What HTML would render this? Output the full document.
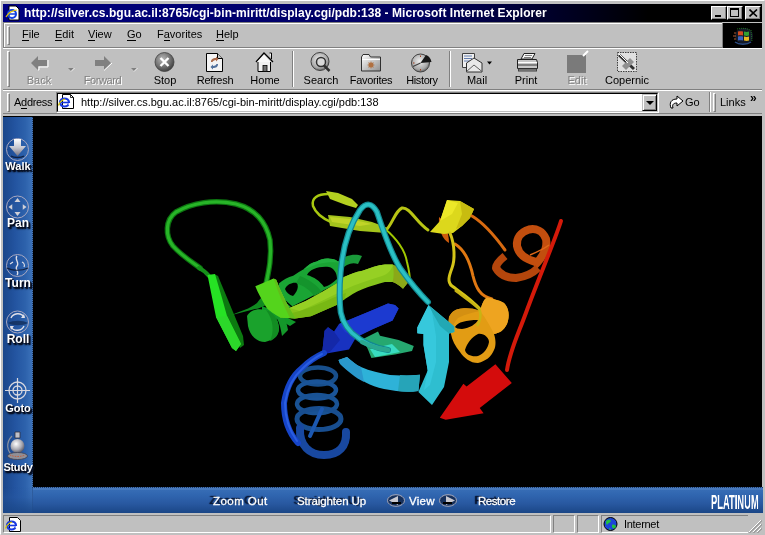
<!DOCTYPE html>
<html><head><meta charset="utf-8">
<style>
*{box-sizing:border-box}
html,body{margin:0;padding:0;width:765px;height:535px;overflow:hidden;background:#c0c0c0;font-family:"Liberation Sans",sans-serif;font-size:11px;color:#000}
.a{position:absolute;will-change:transform}
#title{left:3px;top:4px;width:759px;height:18px;background:linear-gradient(90deg,#000080 0%,#000060 55%,#000000 85%,#000 100%)}
#ttext{left:24px;top:3.5px;color:#fff;font-weight:bold;font-size:12px;letter-spacing:0.05px;white-space:nowrap;line-height:18px}
.tb{top:6px;width:16px;height:14px;background:#c0c0c0;border:1px solid;border-color:#fff #000 #000 #fff;box-shadow:inset -1px -1px #808080}
.hl{height:1px}
.menu{top:27px;line-height:14px}
.menu u{text-decoration:none;border-bottom:1px solid #000}
.grip{width:3px;border:1px solid;border-color:#fff #808080 #808080 #fff}
.lbl{top:74px;line-height:12px;text-align:center;white-space:nowrap}
.dis{color:#808080;text-shadow:1px 1px 0 #fff}
.sep{width:2px;border-left:1px solid #808080;border-right:1px solid #fff}
.panel{top:515px;height:18px;border:1px solid;border-color:#808080 #fff #fff #808080}
</style></head><body>
<!-- window frame highlights -->
<div class="a" style="left:0;top:0;width:765px;height:535px;border:1px solid;border-color:#fff #c0c0c0 #c0c0c0 #fff"></div>

<div id="title" class="a"></div>
<div id="ttext" class="a">http://silver.cs.bgu.ac.il:8765/cgi-bin-miritt/display.cgi/pdb:138 - Microsoft Internet Explorer</div>
<!-- title icon -->
<svg class="a" style="left:5px;top:5px" width="16" height="16" viewBox="0 0 16 16">
<path d="M4 1h7l3 3v11H4z" fill="#fff" stroke="#000" stroke-width="1"/>
<circle cx="7" cy="9" r="4" fill="none" stroke="#1040e0" stroke-width="2"/>
<path d="M4 9h6" stroke="#1040e0" stroke-width="1.5"/>
<path d="M1 12c2-5 8-7 11-7" fill="none" stroke="#e0c000" stroke-width="1.2"/>
</svg>
<div class="a tb" style="left:711px"><div class="a" style="left:3px;top:8px;width:6px;height:2px;background:#000"></div></div>
<div class="a tb" style="left:727px"><div class="a" style="left:2px;top:1px;width:9px;height:9px;border:1px solid #000;border-top-width:2px"></div></div>
<div class="a tb" style="left:745px"><svg class="a" style="left:3px;top:2px" width="9" height="8"><path d="M0.5 0.5L8 7.5M8 0.5L0.5 7.5" stroke="#000" stroke-width="1.6"/></svg></div>

<!-- menu bar -->
<div class="a" style="left:3px;top:22px;width:719px;height:1px;background:#808080"></div>
<div class="a" style="left:4px;top:23px;width:718px;height:1px;background:#fff"></div>
<div class="a" style="left:3px;top:22px;width:1px;height:26px;background:#808080"></div>
<div class="a" style="left:4px;top:23px;width:1px;height:24px;background:#fff"></div>
<div class="a" style="left:3px;top:47px;width:719px;height:1px;background:#808080"></div>
<div class="a grip" style="left:7px;top:26px;height:19px"></div>
<div class="a menu" style="left:22px"><u>F</u>ile</div>
<div class="a menu" style="left:55px"><u>E</u>dit</div>
<div class="a menu" style="left:88px"><u>V</u>iew</div>
<div class="a menu" style="left:127px"><u>G</u>o</div>
<div class="a menu" style="left:157px">F<u>a</u>vorites</div>
<div class="a menu" style="left:216px"><u>H</u>elp</div>
<div class="a" style="left:722px;top:23px;width:40px;height:25px;background:#000;border-left:1px solid #808080"></div>

<!-- toolbar -->
<div class="a" style="left:3px;top:48px;width:759px;height:1px;background:#fff"></div>
<div class="a" style="left:3px;top:89px;width:759px;height:1px;background:#808080"></div>
<div class="a" style="left:3px;top:90px;width:759px;height:1px;background:#fff"></div>
<div class="a grip" style="left:7px;top:51px;height:36px"></div>
<div class="a lbl dis" style="left:24px;width:30px">Back</div>
<div class="a lbl dis" style="left:81px;width:43px;letter-spacing:-0.4px">Forward</div>
<div class="a lbl" style="left:150px;width:30px">Stop</div>
<div class="a lbl" style="left:195px;width:40px;letter-spacing:-0.3px">Refresh</div>
<div class="a lbl" style="left:247px;width:36px">Home</div>
<div class="a sep" style="left:292px;top:51px;height:36px"></div>
<div class="a lbl" style="left:301px;width:40px">Search</div>
<div class="a lbl" style="left:346px;width:50px;letter-spacing:-0.3px">Favorites</div>
<div class="a lbl" style="left:401px;width:42px;letter-spacing:-0.4px">History</div>
<div class="a sep" style="left:449px;top:51px;height:36px"></div>
<div class="a lbl" style="left:462px;width:30px">Mail</div>
<div class="a lbl" style="left:511px;width:30px">Print</div>
<div class="a lbl dis" style="left:562px;width:30px">Edit</div>
<div class="a lbl" style="left:604px;width:46px">Copernic</div>

<!-- toolbar icons -->
<svg class="a" style="left:0;top:48px" width="765" height="28" viewBox="0 48 765 28">
<!-- back -->
<path d="M31 63 L38 56 L38 60 L47 60 L47 66 L38 66 L38 70 Z" fill="#808080"/>
<path d="M38 70 L39 70 L39 67 L48 67 L48 60" fill="none" stroke="#fff" stroke-width="1"/>
<path d="M68 68 h6 l-3 3z" fill="#808080"/><path d="M71 71.5 l3.5 -3.5" stroke="#fff" stroke-width="0.8"/>
<!-- forward -->
<path d="M111 63 L104 56 L104 60 L95 60 L95 66 L104 66 L104 70 Z" fill="#808080"/>
<path d="M104 70.5 L112 63" fill="none" stroke="#fff" stroke-width="1"/>
<path d="M131 68 h6 l-3 3z" fill="#808080"/><path d="M134 71.5 l3.5 -3.5" stroke="#fff" stroke-width="0.8"/>
<!-- stop -->
<defs>
<radialGradient id="gs" cx="0.4" cy="0.35" r="0.7"><stop offset="0" stop-color="#b8b8b8"/><stop offset="0.6" stop-color="#707070"/><stop offset="1" stop-color="#3a3a3a"/></radialGradient>
<radialGradient id="gsearch" cx="0.45" cy="0.4" r="0.65"><stop offset="0" stop-color="#f0f0f0"/><stop offset="0.7" stop-color="#a8a8a8"/><stop offset="1" stop-color="#505050"/></radialGradient>
<linearGradient id="gfold" x1="0" y1="0" x2="1" y2="1"><stop offset="0" stop-color="#fff"/><stop offset="1" stop-color="#909090"/></linearGradient>
</defs>
<circle cx="164.5" cy="62" r="9.5" fill="url(#gs)" stroke="#404040" stroke-width="0.8"/>
<path d="M160.5 58 L168.5 66 M168.5 58 L160.5 66" stroke="#fff" stroke-width="2.4"/>
<!-- refresh -->
<path d="M206.5 53.5 h11 l5 5 v13 h-16z" fill="#f4f4f4" stroke="#000" stroke-width="1"/>
<path d="M217.5 53.5 v5 h5" fill="#c0c0c0" stroke="#000" stroke-width="1"/>
<path d="M211 62 c0-3 2-4 5-4 l0-1.5 l2.5 2.5 l-2.5 2.5 l0-1.5 c-2 0-3 1-3.5 2z" fill="#a86848"/>
<path d="M218 64 c0 3-2 4-5 4 l0 1.5 l-2.5-2.5 l2.5-2.5 l0 1.5 c2 0 3-1 3.5-2z" fill="#50709c"/>
<!-- home -->
<path d="M256 62 L264 53 L273 62" fill="none" stroke="#000" stroke-width="1.3"/>
<path d="M257 62 L264 54.5 L271 62 Z" fill="#f8f8f8"/>
<path d="M269.5 53 h2 v6" fill="#fff" stroke="#000" stroke-width="1"/>
<path d="M258 62 v9.5 h12.5 v-9.5" fill="#f0f0f0" stroke="#000" stroke-width="1"/>
<rect x="263" y="65.5" width="4" height="6" fill="#707070" stroke="#000" stroke-width="0.8"/>
<!-- search -->
<circle cx="320" cy="61.5" r="9" fill="url(#gsearch)" stroke="#404040" stroke-width="1"/>
<circle cx="321" cy="62" r="4.5" fill="#d8d8d8" stroke="#303030" stroke-width="1.5"/>
<path d="M324 65.5 L329.5 71" stroke="#303030" stroke-width="2.5"/>
<!-- favorites -->
<path d="M361.5 57 l1.5 -2.5 h6 l1.5 2.5 h10 v14 h-19z" fill="url(#gfold)" stroke="#303030" stroke-width="1"/>
<path d="M362 59.5 h18" stroke="#fff" stroke-width="1"/>
<path d="M371 61 l0.8 2 2 -0.8 -0.8 2 2 0.8 -2 0.8 0.8 2 -2 -0.8 -0.8 2 -0.8 -2 -2 0.8 0.8 -2 -2 -0.8 2 -0.8 -0.8 -2 2 0.8z" fill="#b07040"/>
<!-- history -->
<circle cx="420.5" cy="63" r="9" fill="url(#gsearch)" stroke="#404040" stroke-width="1"/>
<path d="M420.5 63 L426 55 C429 56 431 59 431.5 62 Z" fill="#181818"/>
<path d="M420.5 63 L413 66.5" stroke="#404040" stroke-width="1.2"/>
<path d="M420.5 55.5 v1.5 M413 63 h1.5 M420.5 69 v1.5" stroke="#a04020" stroke-width="1"/>
<!-- mail -->
<path d="M462.5 53.5 h12 v14 h-12z" fill="#f0f0f0" stroke="#404040" stroke-width="1"/>
<path d="M464 56h8 M464 58.5h8 M464 61h6" stroke="#4060a0" stroke-width="0.8"/>
<path d="M466.5 63 L474 58 L482 63 v9 h-15.5z" fill="#e8e8e8" stroke="#303030" stroke-width="1"/>
<path d="M466.5 71.5 L474 65 L482 71.5" fill="none" stroke="#606060" stroke-width="1"/>
<path d="M487 61.5 h5 l-2.5 3z" fill="#000"/>
<!-- print -->
<path d="M521 59 L524 53.5 h11 l-3 5.5z" fill="#f8f8f8" stroke="#202020" stroke-width="1"/>
<path d="M525 55.5 h7 M524 57.5 h7" stroke="#606060" stroke-width="0.8"/>
<path d="M517.5 59.5 h19 l1 3 v6 h-20z" fill="#c8c8c8" stroke="#202020" stroke-width="1"/>
<path d="M518 62.5 h19" stroke="#fff" stroke-width="1"/>
<path d="M518 65 h19" stroke="#505050" stroke-width="1.2"/>
<path d="M518 68.5 h19 v3 h-19z" fill="#404040"/>
<path d="M519 70 h17" stroke="#a0a0a0" stroke-width="1"/>
<!-- edit (disabled) -->
<rect x="567" y="55" width="19" height="18" fill="#7a7a7a"/>
<path d="M583 56 L588 51" stroke="#fff" stroke-width="2"/>
<!-- copernic -->
<rect x="617.5" y="52.5" width="19" height="19" fill="#e0e0e0" stroke="#404040" stroke-width="1" stroke-dasharray="1.5 1"/>
<path d="M619 55 L634 69" stroke="#303030" stroke-width="3"/>
<path d="M622 66 L630 58 L634 62 L626 70 Z" fill="#909090"/>
<path d="M619 54 L628 63" stroke="#fff" stroke-width="1"/>
</svg>

<!-- address bar -->
<div class="a" style="left:3px;top:113px;width:759px;height:1px;background:#808080"></div>
<div class="a grip" style="left:7px;top:93px;height:19px"></div>
<div class="a" style="left:14px;top:96px;line-height:12px;letter-spacing:-0.3px">A<u style="text-decoration:none;border-bottom:1px solid #000">d</u>dress</div>
<div class="a" style="left:56px;top:92px;width:603px;height:21px;background:#fff;border:1px solid;border-color:#808080 #fff #fff #808080"><div class="a" style="left:0;top:0;right:0;bottom:0;border:1px solid;border-color:#000 #c0c0c0 #c0c0c0 #000"></div></div>
<div class="a" style="left:81px;top:96px;line-height:12px;white-space:nowrap">http://silver.cs.bgu.ac.il:8765/cgi-bin-miritt/display.cgi/pdb:138</div>
<div class="a" style="left:642px;top:94px;width:15px;height:17px;background:#c0c0c0;border:1px solid;border-color:#c0c0c0 #000 #000 #c0c0c0;box-shadow:inset 1px 1px #fff,inset -1px -1px #808080"><div class="a" style="left:3px;top:6px;width:0;height:0;border-left:4px solid transparent;border-right:4px solid transparent;border-top:4px solid #000"></div></div>
<div class="a" style="left:685px;top:96px;line-height:12px">Go</div>
<div class="a sep" style="left:709px;top:92px;height:20px"></div>
<div class="a grip" style="left:713px;top:93px;height:19px"></div>
<div class="a" style="left:720px;top:96px;line-height:12px">Links</div>

<!-- content -->
<div class="a" id="content" style="left:3px;top:116px;width:759px;height:397px;background:#000;border-top:1px solid #000"></div>

<!-- sidebar -->
<div class="a" style="left:3px;top:117px;width:30px;height:396px;background:linear-gradient(90deg,#1a468a 0%,#2354a0 40%,#2d62ac 75%,#3a70b8 95%,#2a5490 100%)"></div>
<div class="a" style="left:33px;top:487px;width:730px;height:26px;background:linear-gradient(180deg,#3a70b8 0%,#3066b0 30%,#2858a0 65%,#1a4686 100%)"></div>
<div class="a" style="left:3px;top:487px;width:30px;height:26px;background:linear-gradient(180deg,rgba(58,112,184,0.0) 0%,rgba(40,88,160,0.35) 40%,rgba(26,70,134,0.9) 100%)"></div>
<div class="a" style="left:32px;top:117px;width:1px;height:371px;background:repeating-linear-gradient(180deg,#1a3a6a 0 1px,#4a78b8 1px 2px)"></div>
<div class="a" style="left:32px;top:487px;width:731px;height:1px;background:repeating-linear-gradient(90deg,#1a3a6a 0 1px,#4a78b8 1px 2px)"></div>
<div class="a" style="left:33px;top:488px;width:730px;height:2px;background:rgba(120,160,220,0.25)"></div>
<svg class="a" style="left:3px;top:117px" width="760" height="396" viewBox="3 117 760 396">
<defs>
<linearGradient id="ga" x1="0" y1="0" x2="0" y2="1"><stop offset="0" stop-color="#ffffff"/><stop offset="0.5" stop-color="#c8c8d0"/><stop offset="1" stop-color="#707080"/></linearGradient>
<radialGradient id="gball" cx="0.4" cy="0.35" r="0.7"><stop offset="0" stop-color="#fff"/><stop offset="0.6" stop-color="#a8a8b0"/><stop offset="1" stop-color="#505060"/></radialGradient>
</defs>
<g fill="none" stroke="#a8a8c0" stroke-width="1">
<circle cx="17.5" cy="149.5" r="11"/>
<circle cx="17.5" cy="207" r="11"/>
<circle cx="17.5" cy="265.5" r="11"/>
<circle cx="17.5" cy="322" r="11"/>
</g>
<!-- walk arrow -->
<path d="M14 139 h7 v7 h5 l-8.5 10 l-8.5 -10 h5z" fill="url(#ga)"/>
<path d="M11 156 c3 2 10 2 13 0" stroke="#102040" stroke-width="1.5" fill="none"/>
<!-- pan arrows -->
<g fill="#d0d0d8">
<path d="M17.5 198 l3 4 h-6z"/><path d="M17.5 216 l3 -4 h-6z"/><path d="M8.5 207 l4 -3 v6z"/><path d="M26.5 207 l-4 -3 v6z"/>
</g>
<path d="M12 204 h11 v6 h-11z" fill="#2a5aa0" opacity="0.5"/>
<!-- turn -->
<path d="M17 256 c-3 3 3 7 0 10 c-3 3 3 6 0 9" stroke="#e0e0e8" stroke-width="1.3" fill="none"/>
<path d="M10 264 l3 -2 M22 262 c2 1 3 3 2 5" stroke="#e0e0e8" stroke-width="1.2" fill="none"/>
<path d="M7 268 c5 3 15 3 21 0" stroke="#102040" stroke-width="1.2" fill="none"/>
<!-- roll -->
<path d="M11 318 c2 -5 10 -6 13 -1" stroke="#e0e0e8" stroke-width="1.4" fill="none"/>
<path d="M24 326 c-2 5 -10 6 -13 1" stroke="#e0e0e8" stroke-width="1.4" fill="none"/>
<path d="M24 314 l1 4 l-4 0z M11 330 l-1 -4 l4 0z" fill="#e0e0e8"/>
<path d="M8 323 c5 -3 15 -3 20 0 c-5 3 -15 3 -20 0z" fill="#102850" opacity="0.7"/>
<!-- goto crosshair -->
<g fill="none" stroke="#d8d8e0">
<circle cx="17.5" cy="390.5" r="8.5" stroke-width="1.3"/>
<circle cx="17.5" cy="390.5" r="4.5" stroke-width="1.3"/>
<path d="M17.5 378 v25 M5 390.5 h25" stroke-width="1.2"/>
</g>
<!-- study -->
<path d="M15 432 h5 v6 h-5z" fill="#c0c0c8" stroke="#303040" stroke-width="0.8"/>
<path d="M12 436 c-6 6 -6 16 2 20" stroke="#8890a0" stroke-width="1.2" fill="none"/>
<circle cx="17.5" cy="446" r="7" fill="url(#gball)"/>
<ellipse cx="17.5" cy="456" rx="10" ry="3.5" fill="#909098" stroke="#404050" stroke-width="0.8"/>
<path d="M10 455 c4 2 11 2 15 0" stroke="#c06040" stroke-width="1" fill="none" stroke-dasharray="1.5 1"/>
<!-- bottom nav ellipses -->
<ellipse cx="396" cy="500.5" rx="8.5" ry="5.8" fill="#16305c" stroke="#a8a8b8" stroke-width="1"/>
<path d="M389 500.5 l9 -4.5 v9z" fill="#c8c8d0"/>
<path d="M392 503 h9" stroke="#000" stroke-width="2"/>
<ellipse cx="448" cy="500.5" rx="8.5" ry="5.8" fill="#16305c" stroke="#a8a8b8" stroke-width="1"/>
<path d="M455 500.5 l-9 -4.5 v9z" fill="#c8c8d0"/>
<path d="M443 503 h9" stroke="#000" stroke-width="2"/>
</svg>
<style>
.sl{color:#fff;font-weight:bold;font-size:11px;line-height:12px;text-shadow:1px 1px 0 #050c20,2px 2px 1px #050c20,1px 2px 2px #000;white-space:nowrap;text-align:center;width:30px;left:3px}
.bl{color:#fff;font-size:11.5px;-webkit-text-stroke:0.3px #fff;line-height:14px;white-space:nowrap;text-shadow:-3px -1px 1px #06122c,-4px -1px 1px #06122c}
</style>
<div class="a sl" style="top:160px">Walk</div>
<div class="a sl" style="top:217px;font-size:12px">Pan</div>
<div class="a sl" style="top:277px;font-size:12px">Turn</div>
<div class="a sl" style="top:333px;font-size:12px">Roll</div>
<div class="a sl" style="top:402px;font-size:11px">Goto</div>
<div class="a sl" style="top:461px;font-size:11px;letter-spacing:-0.3px">Study</div>
<div class="a bl" style="left:213px;top:494px;letter-spacing:0.45px">Zoom Out</div>
<div class="a bl" style="left:297px;top:494px;letter-spacing:-0.1px">Straighten Up</div>
<div class="a bl" style="left:409px;top:494px;text-shadow:none;letter-spacing:0.3px">View</div>
<div class="a bl" style="left:478px;top:494px;letter-spacing:-0.45px">Restore</div>
<div class="a" style="left:711px;top:492px;color:#fff;font-weight:bold;font-size:20px;line-height:20px;transform:scaleX(0.468);transform-origin:0 0;letter-spacing:0px;white-space:nowrap">PLATINUM</div>

<svg class="a" style="left:0;top:0" width="765" height="535" viewBox="0 0 765 535">
<g fill="none" stroke-linecap="round" stroke-linejoin="round">
<!-- green loop tube -->
<path d="M200 268 C192 262 182 256 173 246 C165 236 165 220 176 212 C192 203 214 199 236 204 C255 209 266 222 270 240 C272 256 269 270 266 284" stroke="#0c7410" stroke-width="5.5"/>
<path d="M200 268 C192 262 182 256 173 246 C165 236 165 220 176 212 C192 203 214 199 236 204 C255 209 266 222 270 240 C272 256 269 270 266 284" stroke="#28b428" stroke-width="3.2"/>
<path d="M199 268 C203 270 206 272 209 276" stroke="#16901a" stroke-width="4"/>
</g>
<!-- bright green strand -->
<polygon points="214,274 218,276 228,300 243,336 244,345 240,348 226,316" fill="#0c7a10"/>
<polygon points="207.5,275 215,274 222,298 227,316 241,344 236,351 232,348 216,317" fill="#26e224"/>
<polygon points="216,317 227,316 241,344 236,351 232,348" fill="#2cd82a"/>
<!-- green helix rings (behind band) -->
<path d="M337 262 C345 255 355 253 362 256 L358 264 C352 262 346 264 341 270 Z" fill="#1a9a3a"/>
<path d="M278.8 283.6 C283 280 288 277 293.2 275.8 C297 273 300 271 303.7 269.2 C308 265 312 262 316.7 261.4 C321 259 326 258 329.8 258.8 C334 259 337 260 339 262.7 C341 267 341 272 341 277 L336 284 L289 308 C285 304 282 300 280 297 Z" fill="#1aa434"/>
<path d="M303.7 269.2 C308 265 312 262 316.7 261.4 C321 259 326 258 329.8 258.8 C334 259 337 260 339 262.7 C334 262 326 262 318 264 C312 266 308 268 303.7 269.2Z" fill="#22b040"/>
<path d="M285 289 C287 284 293 282 297 283 C299 287 297 292 293 296 C289 295 286 292 285 289Z" fill="#000"/>
<path d="M307 275 C310 269 319 266 329 267 C334 268 337 273 337 279 C333 283 328 286 324 287 C320 281 314 277 307 275Z" fill="#000"/>
<path d="M300 276 C308 279 316 284 322 292 L314 296 C310 290 304 286 296 283Z" fill="#14942c"/>
<path d="M284 300 L292 307" stroke="#000" stroke-width="1.5"/>
<path d="M262 306 C272 310 284 316 296 322 L290 326 C280 320 270 316 262 312Z" fill="#10982a"/>
<!-- green helix front face -->
<path d="M232 315 C240 311 250 309 257 303 C259 300 261 298 262 297 L266 305 C262 307 258 309 255 309 Z" fill="#108a20"/>
<path d="M247 316 C250 311 256 308 266 310 C273 312 278 318 279 328 C279 335 274 340 265 342 C257 342 250 336 248 326 Z" fill="#1aa22c"/>
<path d="M266 310 C273 312 278 318 279 328 C279 335 275 339 270 341 C274 333 274 320 266 310Z" fill="#128c22"/>
<path d="M270 302 C280 307 286 318 288 330 L282 336 C280 322 276 312 266 306 Z" fill="#14982a"/>
<!-- yellow-green broad band -->
<path d="M276.2 279.7 C280 290 285 300 289.3 308 L305.7 300.9 L321.2 292.6 L336.6 283.4 C339 281 341 279 344.5 276.8 C350 274 356 272 362.4 270.7 C370 268 378 265 384.9 264.5 L392.7 264.5 C396 266 398 268 400.4 271.8 C404 275 406 279 408.2 282.3 L403 288.8 C399 285 396 283 392.7 281.9 L384.9 281.9 C378 284 370 286 362.4 289.2 C355 292 350 296 344.5 299.3 L336.6 305 L326.3 309.6 L310.9 316.3 L295.4 318.4 L280.1 317.6 Z" fill="#86c41c"/>
<path d="M289.3 308 L305.7 300.9 L321.2 292.6 L336.6 283.4 C339 281 341 279 344.5 276.8 C350 274 356 272 362.4 270.7 C370 268 378 265 384.9 264.5 L392.7 264.5 C392 270 388 274 382 276 C370 280 356 284 344 290 C330 297 316 304 300 311 Z" fill="#96d024"/>
<path d="M392.7 264.5 C396 266 398 268 400.4 271.8 C404 275 406 279 408.2 282.3 L403 288.8 C399 285 396 283 392.7 281.9 C394 276 394 270 392.7 264.5Z" fill="#8aa818"/>
<path d="M344.5 299.3 L336.6 305 L326.3 309.6 L310.9 316.3 L295.4 318.4 L292 313 C305 310 320 304 335 297 C340 295 343 294 346 293Z" fill="#78b814"/>
<path d="M255.3 286.2 L273.6 278.4 L276.2 279.7 C280 290 285 300 289.3 308 L295.4 318.4 L280.1 317.6 C274 314 270 311 267 308.4 C262 300 258 293 255.3 286.2 Z" fill="#54d41c"/>
<path d="M273.6 278.4 L276.2 279.7 C280 290 285 300 289.3 308 L295.4 318.4 L290 318 C284 306 278 292 273.6 278.4Z" fill="#62bc1a"/>
<!-- top yellow-green hairpin -->
<g fill="none" stroke-linecap="round" stroke-linejoin="round">
<path d="M328 194 C318 194 311 198 313 206 C316 214 324 219 331 222" stroke="#a8c810" stroke-width="2.5"/>
<path d="M386 230 C392 225 395 211 402 208 C410 207 416 222 428 230" stroke="#b8c414" stroke-width="3"/>
<path d="M384 228 C396 238 405 250 407 262 C409 270 410 276 410 282" stroke="#a0c800" stroke-width="2"/>
</g>
<polygon points="326,191 338,193 352,199 358,205 356,208 346,205 330,199" fill="#b4d020"/>
<polygon points="328,215 350,217 372,222 388,228 386,233 360,231 330,226" fill="#a4c41c"/>
<polygon points="330,217 350,219 372,224 360,226 332,222" fill="#c0d428"/>
<!-- blue arrow -->
<polygon points="339,324 368,312 388,303.5 395,305 398.6,308.6 392.6,320.5 373,329 356,337.5 349,349.5 330.6,352.8 322,354.5 324.6,330.7 328,327.3 334,331.5" fill="#1832c0"/>
<polygon points="339,324 368,312 388,303.5 395,305 398.6,308.6 392.6,320.5 373,329 356,337 345,332" fill="#1c3ad0"/>
<polygon points="322,354.5 324.6,330.7 328,327.3 334,331.5 340,340 330,352" fill="#1428a8"/>
<!-- teal strand -->
<polygon points="363,339 378,331.5 380,335.8 398.6,340 413.8,346 412,351 395,354.5 371.4,357.9 368,349.4" fill="#26a870"/>
<polygon points="370,349 392,344 400,352 375,357" fill="#38dcc0"/>
<!-- cyan tube big loop -->
<g fill="none" stroke-linecap="round" stroke-linejoin="round">
<path d="M388 350 C375 348 362 342 352 333 C345 326 340 316 340 305 C339 290 340 275 342 260 C345 240 352 222 360 210 C366 202 372 203 377 212 C383 230 390 252 400 268 C410 282 418 292 428 302" stroke="#138890" stroke-width="6"/>
<path d="M388 350 C375 348 362 342 352 333 C345 326 340 316 340 305 C339 290 340 275 342 260 C345 240 352 222 360 210 C366 202 372 203 377 212 C383 230 390 252 400 268 C410 282 418 292 428 302" stroke="#2ac0c4" stroke-width="3.6"/>
</g>
<!-- blue helix rings -->
<g fill="none" stroke-linecap="round">
<ellipse cx="318" cy="376" rx="18" ry="8.5" stroke="#184f8c" stroke-width="4.5"/>
<ellipse cx="317" cy="390" rx="19" ry="8.5" stroke="#1a5498" stroke-width="4.5"/>
<ellipse cx="317" cy="404" rx="20" ry="9" stroke="#195294" stroke-width="4.5"/>
<ellipse cx="319" cy="419" rx="22" ry="10.5" stroke="#184e90" stroke-width="5"/>
<path d="M300 428 C299 446 310 455 324 455 C339 455 347 446 346 432" stroke="#1848a0" stroke-width="8"/>
<path d="M322 409 L310 436" stroke="#1c58b0" stroke-width="4"/>
</g>
<path d="M362 342 C370 346 378 349 388 350" fill="none" stroke="#2aa890" stroke-width="4.5" stroke-linecap="round"/>
<!-- blue tube -->
<path d="M324 353 C315 357 308 362 302 368 C292 376 286 390 284 403 C284 418 288 432 298 443" fill="none" stroke="#1644c8" stroke-width="6" stroke-linecap="round"/>
<path d="M322 354 C314 358 308 363 302 369 C293 377 287 390 285 403 C285 418 289 430 297 441" fill="none" stroke="#2a5ee0" stroke-width="2" stroke-linecap="round"/>
<!-- cyan lower band -->
<path d="M338.5 360 L347 357 C352 361 356 365 361 367 C370 371 380 373 390 375 C402 376 412 375 420 374.7 L418.4 391 C406 393 396 391 384 389 C370 386 360 380 352 373 C346 369 342 366 340 363.7 Z" fill="#2eb2d8"/>
<path d="M338.5 360 L347 357 C352 361 356 365 361 367 L364 382 C356 378 346 370 340 363.7Z" fill="#2a98cc"/>
<path d="M400 375 C408 376 414 375 420 374.7 L418.4 391 C410 392 404 392 398 391Z" fill="#26a4b8"/>
<!-- yellow helix + orange behind -->
<path d="M439 217 C444 220 449 232 449 243 C443 240 438 230 439 217 Z" fill="#d05c0c"/>
<polygon points="447,200 460,201 474,209 470,218 462,226 453,233 444,234 430,232 440,221" fill="#dcd81c"/>
<polygon points="460,201 474,209 470,218 462,226 456,229 462,214" fill="#c8bc10"/>
<polygon points="447,200 458,203 452,214 440,221" fill="#ece828"/>
<g fill="none" stroke-linecap="round" stroke-linejoin="round">
<!-- orange tubes -->
<path d="M472 216 C482 222 492 232 505 250" stroke="#d86a10" stroke-width="3"/>
<path d="M455 244 C465 250 470 262 473 276 C476 288 480 296 492 299" stroke="#e07812" stroke-width="3"/>
<!-- yellow tube -->
<path d="M450 233 C455 245 455 260 452 268 C449 276 447 282 452 286 C460 292 470 298 481 310" stroke="#d4c418" stroke-width="3"/>
</g>
<!-- dark orange helix -->
<g fill="none" stroke-linejoin="round">
<path d="M534 266 C542 258 548 248 546 239 C543 231 536 228 529 229.5 C521 232 516 238 517 246 C519 256 528 260 536 262" stroke="#c24e0e" stroke-width="8"/>
<path d="M505 256 C500 260 496 264 496 268 C500 275 508 278 516 278 C524 277 532 274 538 268" stroke="#b4460c" stroke-width="8"/>
<path d="M530 255 C537 252 544 249 549 245" stroke="#e06818" stroke-width="1.5"/>
</g>
<!-- red tube -->
<path d="M561 221 C555 240 540 275 527 310 C518 335 510 350 507 370" fill="none" stroke="#d41a0a" stroke-width="4" stroke-linecap="round"/>
<!-- orange helix -->
<path d="M449 317 C452 311 456 309 462 308.5 C468 308 474 308.5 480 311 C482 304 484 299 487 297.5 C493 299 499 300 504 303 C509 308 510 316 507 324 C504 330 500 333 494 334 C496 340 496 346 494 350 C491 357 486 361 478 363 C470 363 464 358 460 352 C455 346 452 340 451 334 C449 328 448 322 449 317 Z M455 327 C458 322 466 320 478 320 C476 324 470 328 462 329 C458 329 456 328 455 327 Z M465 350 C467 343 472 337 478 334 C484 333 489 338 489 342 C488 348 484 354 478 356 C472 357 466 355 465 350 Z" fill="#e29c14" fill-rule="evenodd"/>
<path d="M480 311 C482 304 484 299 487 297.5 C493 299 499 300 504 303 C509 308 510 316 507 324 C504 330 500 333 494 334 C490 326 486 318 480 311Z" fill="#eea420"/>
<path d="M449 317 C452 311 456 309 462 308.5 C468 308 474 308.5 480 311 C474 312 466 314 458 318 C454 322 452 328 451 334 C449 328 448 322 449 317Z" fill="#d49012"/>
<path d="M455 290 C462 296 472 302 479 309 C482 314 480 322 477 326" stroke="#c8b414" stroke-width="2.5" fill="none"/>
<!-- cyan arrow -->
<polygon points="428.5,305 454.3,326.5 454.3,332 449,333.5 449,362 444,387 432,405 418.4,392 427.7,370.5 423.5,345 423.5,334 417.3,333.2 417.3,327.6" fill="#2ebed0"/>
<polygon points="428.5,305 454.3,326.5 454.3,332 449,333.5 440,326 432,312" fill="#22a8b4"/>
<polygon points="428.5,305 432,312 436,336 436,362 430,385 424,390 427.7,370.5 423.5,345 423.5,334 417.3,333.2 417.3,327.6" fill="#36c8dc"/>
<!-- red arrow -->
<polygon points="495.4,364.2 511.8,383.1 479.7,408 483.6,413.2 445.7,419.8 439.8,417.8 463.4,383.8 466.6,386.4" fill="#d40c0c"/>
</svg>

<!-- status bar -->
<div class="a panel" style="left:3px;width:548px"></div>
<div class="a panel" style="left:553px;width:22px"></div>
<div class="a panel" style="left:577px;width:22px"></div>
<div class="a panel" style="left:601px;width:147px;border-right:none"></div>
<div class="a" style="left:624px;top:518px;line-height:12px;letter-spacing:-0.3px">Internet</div>
<!-- IE icon address -->
<svg class="a" style="left:57px;top:93px" width="18" height="18" viewBox="0 0 18 18">
<path d="M5.5 1.5 h8 l3 3 v11 h-11z" fill="#fff" stroke="#000" stroke-width="1"/>
<path d="M13.5 1.5 v3 h3" fill="none" stroke="#000" stroke-width="0.8"/>
<ellipse cx="7.5" cy="9.5" rx="4.5" ry="4" fill="none" stroke="#1838e0" stroke-width="2.2"/>
<path d="M3.5 9.5 h8" stroke="#1838e0" stroke-width="1.6"/>
<path d="M11.5 11 h1.5" stroke="#fff" stroke-width="2"/>
<path d="M1.5 12.5 C2.5 9 5 7 8 6" fill="none" stroke="#d8c800" stroke-width="1.3"/>
</svg>
<!-- IE icon status -->
<svg class="a" style="left:3.5px;top:515.5px" width="18" height="18" viewBox="0 0 18 18">
<path d="M5.5 1.5 h8 l3 3 v11 h-11z" fill="#fff" stroke="#000" stroke-width="1"/>
<ellipse cx="7.5" cy="9.5" rx="4.5" ry="4" fill="none" stroke="#1838e0" stroke-width="2.2"/>
<path d="M3.5 9.5 h8" stroke="#1838e0" stroke-width="1.6"/>
<path d="M11.5 11 h1.5" stroke="#fff" stroke-width="2"/>
<path d="M1.5 12.5 C2.5 9 5 7 8 6" fill="none" stroke="#d8c800" stroke-width="1.3"/>
</svg>
<!-- Go icon -->
<svg class="a" style="left:668px;top:93px" width="18" height="18" viewBox="0 0 18 18">
<path d="M3 15 C1 10 3 6 9 6 L9 3 L15 8 L9 13 L9 10 C5 10 4 12 5 15 Z" fill="#fff" stroke="#000" stroke-width="1"/>
</svg>
<div class="a" style="left:750px;top:92px;font-size:12px;font-weight:bold;line-height:12px;letter-spacing:-1px">&#187;</div>
<!-- windows logo -->
<svg class="a" style="left:723px;top:24px" width="38" height="23" viewBox="0 0 38 23">
<rect width="38" height="23" fill="#000"/>
<ellipse cx="21" cy="12" rx="9" ry="8" fill="#141a28"/>
<path d="M15 7.5 C16.5 7 18 7 20 7.5 v4 c-2-0.5-3.5-0.5-5 0z" fill="#d04a20"/>
<path d="M21 7.5 c2 0.5 3.5 0.5 5 0 v4 c-1.5 0.5-3 0.5-5 0z" fill="#30a030"/>
<path d="M15 12.5 c1.5-0.5 3-0.5 5 0 v4 c-2-0.5-3.5-0.5-5 0z" fill="#3a62c0"/>
<path d="M21 12.5 c2 0.5 3.5 0.5 5 0 v4 c-1.5 0.5-3 0.5-5 0z" fill="#e8b820"/>
<path d="M11 9 h2 M10 12 h3 M11 15 h2" stroke="#b05a30" stroke-width="1.2"/>
<path d="M14 5 c4 -1 9 -1 13 1 M28 6 l1 12" stroke="#207020" stroke-width="1" fill="none" stroke-dasharray="1 1"/>
<path d="M12 18 c4 3 12 3 16 0" stroke="#2a4a80" stroke-width="1.5" fill="none"/>
</svg>
<!-- globe -->
<svg class="a" style="left:603px;top:516px" width="16" height="16" viewBox="0 0 16 16">
<circle cx="7.5" cy="8" r="6.5" fill="#1c44d8" stroke="#000" stroke-width="1"/>
<path d="M3 5 c2-2 4-2 5 0 c-1 2-3 2-4 4 c-1-1-1-2-1-4z M9 9 c2-1 4 0 4 2 c-2 2-3 2-4 0z M6 12 c1 0 2 1 2 2 c-1 0-2 0-2-2z" fill="#20c040"/>
</svg>
<!-- size grip -->
<svg class="a" style="left:748px;top:519px" width="14" height="14" viewBox="0 0 14 14">
<path d="M13 1 L1 13 M13 5 L5 13 M13 9 L9 13" stroke="#fff" stroke-width="1"/>
<path d="M14 1 L1 14 M14 5 L5 14 M14 9 L9 14" stroke="#808080" stroke-width="1" transform="translate(0.5,0)"/>
</svg>

</body></html>
